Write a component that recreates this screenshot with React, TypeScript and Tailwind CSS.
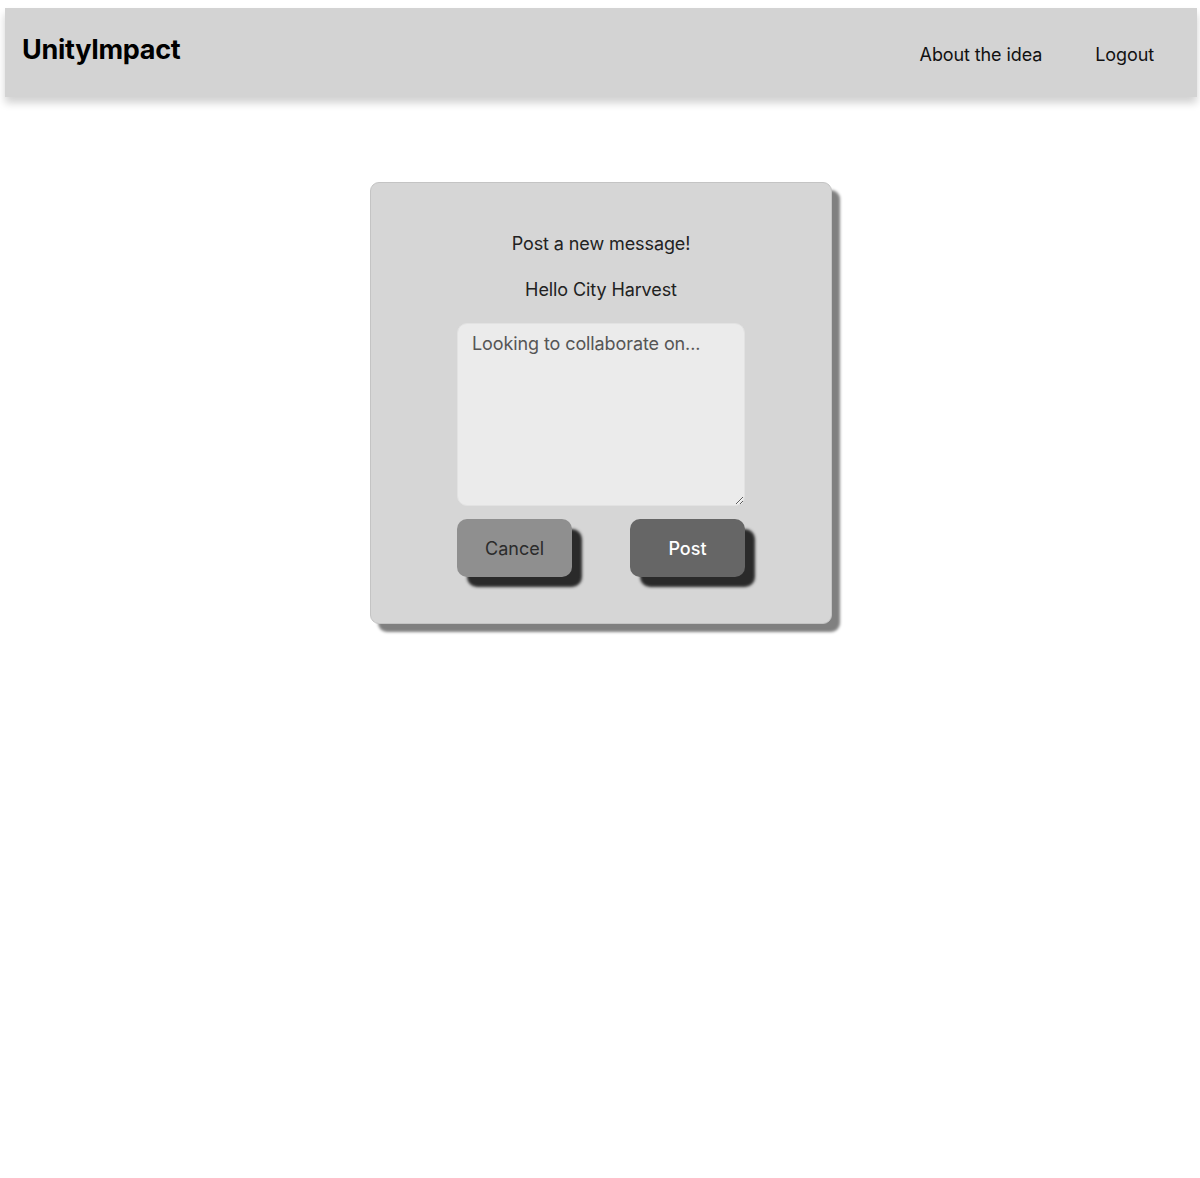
import React from "react";

export default function App() {
  return (
    <div className="min-h-[1178px] w-[1200px] bg-white pt-2 font-['Inter','Noto_Sans',sans-serif]">
      <header className="ml-[5px] flex h-[89px] w-[1192px] items-center justify-between bg-[#d3d3d3] pl-[17px] pr-[43px] shadow-[0_6px_8px_rgba(0,0,0,0.18)]">
        <div className="-mt-[5px] text-[27px] font-bold tracking-[-0.3px] text-black">UnityImpact</div>
        <nav className="mt-[3px] flex items-center gap-[53px] text-[18px] tracking-[-0.1px] text-[#111]">
          <span>About the idea</span>
          <span>Logout</span>
        </nav>
      </header>

      <main className="flex justify-center pt-[85px]">
        <div className="ml-[2px] flex w-[462px] flex-col items-center rounded-[9px] border border-[#c4c4c4] bg-[#d6d6d6] pt-[47px] pb-[46px] shadow-[8px_8px_3px_#808080]">
          <p className="text-[18px] leading-[28px] tracking-[-0.1px] text-[#222]">Post a new message!</p>
          <p className="mt-[18px] text-[18px] leading-[28px] tracking-[-0.1px] text-[#222]">Hello City Harvest</p>
          <textarea
            className="mt-[19px] h-[183px] w-[288px] rounded-[10px] border border-[#e2e2e2] bg-[#ebebeb] px-[14px] py-[6px] text-[18px] leading-[28px] tracking-[-0.1px] text-[#222] placeholder:text-[#555] outline-none"
            placeholder="Looking to collaborate on..."
          />
          <div className="mt-[13px] flex w-[288px] justify-between">
            <button className="h-[58px] w-[115px] rounded-[10px] bg-[#8f8f8f] text-[18px] text-[#2b2b2b] shadow-[10px_10px_3px_#2a2a2a]">
              Cancel
            </button>
            <button className="h-[58px] w-[115px] rounded-[10px] bg-[#666666] text-[18px] font-medium text-white shadow-[10px_10px_3px_#2a2a2a]">
              Post
            </button>
          </div>
        </div>
      </main>
    </div>
  );
}
